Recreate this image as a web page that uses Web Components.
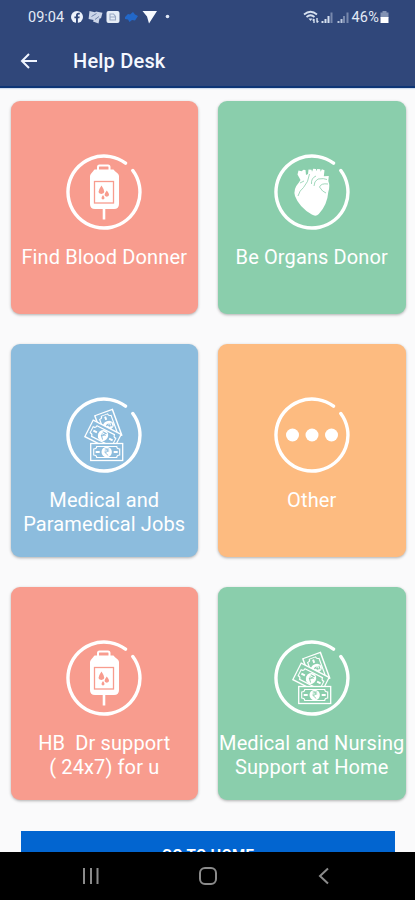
<!DOCTYPE html>
<html lang="en">
<head>
<meta charset="UTF-8">
<meta name="viewport" content="width=device-width, initial-scale=1.0">
<title>Help Desk</title>
<style>
  html, body {
    margin: 0;
    height: 100%;
    overflow: hidden;
    font-family: Roboto, sans-serif;
  }
</style>
</head>
<body>
<help-desk-app></help-desk-app>

<script>
class StatusBar extends HTMLElement {
  connectedCallback() {
    this.attachShadow({ mode: 'open' });
    this.shadowRoot.innerHTML = `
      <style>
        :host {
          display: flex;
          justify-content: space-between;
          align-items: center;
          height: 34px;
          padding: 0 26px 0 28px;
          color: #e3eaf6;
          font-size: 14.5px;
        }

        .side {
          display: flex;
          align-items: center;
        }

        svg {
          display: block;
        }

        .time {
          width: 43px;
        }

        .percent {
          margin-left: -2px;
          letter-spacing: 0.2px;
        }

        .battery {
          margin-left: 1px;
        }
      </style>
      <div class="side">
        <span class="time">09:04</span>
        <svg width="100" height="14" viewBox="0 0 100 14">
          <circle cx="6" cy="7" r="6" fill="#edf2fb"/>
          <path d="M5 13V8.3H3.4V6.4H5V5.2C5 3.6 6 2.7 7.4 2.7h1.4v1.8H7.9c-.7 0-1 .3-1 .9v1h1.8l-.3 1.9H6.9V13z" fill="#30477a"/>
          <path d="M18.500 1l5.500 1.200 1-.7 6.500 1.200-1.500 5.500-1.500.3-1 5-5.500-2 .6-1.600-5-1z" fill="#cbd5e8"/>
          <path d="M20.500 6.500l5-3M24 9.500l4-3" stroke="#7386ab" stroke-width="1" fill="none"/>
          <rect x="35.500" y="1" width="13" height="12" rx="2" fill="#e6edf6"/>
          <path d="M39 10V4h3.500l2 2.500V10zM39 7h5" stroke="#9aa9c4" stroke-width="1.100" fill="none"/>
          <path d="M54 7l3-3 2 .5 3-2.500 2 2.500 3 1.500-3 4.500-3-.5-2.500 2-1.500-2.500-3-.5z" fill="#2268c9"/>
          <path d="M71.500 1h14.500l-8 12.500-2-7z" fill="#f7faff"/>
          <circle cx="96.500" cy="6.500" r="1.800" fill="#dfe7f5"/>
        </svg>
      </div>
      <div class="side">
        <svg width="50" height="15" viewBox="0 0 50 15">
          <path d="M1 4.500Q7.500-1 14 4.500M3.500 7q4-3.500 8 0" fill="none" stroke="#d5e0ef" stroke-width="1.700"/>
          <path d="M5.500 8.500h4l-2 2.500z" fill="#d5e0ef"/>
          <path d="M11 13V9m0 0l-1.300 1.500M14 8v4.500m0 0l1.300-1.500" stroke="#d5e0ef" stroke-width="1.400" fill="none"/>
          <path d="M19.500 13v-2M22.500 13V9M25.500 13V6" stroke="#d5e0ef" stroke-width="2"/>
          <path d="M28.500 13V2.500" stroke="#7788ac" stroke-width="2"/>
          <path d="M35.500 13v-2M38.500 13V9" stroke="#b9c6dc" stroke-width="2"/>
          <path d="M41 13V6M44.500 13V2.500" stroke="#7788ac" stroke-width="2"/>
        </svg>
        <span class="percent">46%</span>
        <svg class="battery" width="9" height="14" viewBox="0 0 9 14">
          <path d="M2.500 1h4v1.500h2V8H.5V2.500h2z" fill="#8292b3"/>
          <path d="M.5 7h8v6h-8z" fill="#fff"/>
        </svg>
      </div>
    `;
  }
}

class AppHeader extends HTMLElement {
  connectedCallback() {
    this.attachShadow({ mode: 'open' });
    this.shadowRoot.innerHTML = `
      <style>
        :host {
          display: block;
          box-sizing: border-box;
          height: 88px;
          background-color: #30477a;
          border-bottom: 2px solid #0d3576;
          box-shadow: 0 1px 1px #cfdcee;
          z-index: 1;
        }

        .toolbar {
          display: flex;
          align-items: center;
          height: 54px;
          padding-left: 20px;
        }

        h1 {
          margin: 0 0 0 35px;
          font-size: 20px;
          font-weight: 500;
          letter-spacing: 0.2px;
          color: #f5f8ff;
        }
      </style>
      <status-bar></status-bar>
      <div class="toolbar">
        <svg width="18" height="16" viewBox="0 0 18 16">
          <path d="M17 8H2M9 1L2 8l7 7" fill="none" stroke="#f0f5ff" stroke-width="2"/>
        </svg>
        <h1><slot></slot></h1>
      </div>
    `;
  }
}

// One rupee note, drawn around its own centre
const note = `
  <rect x="-16" y="-8.500" width="32" height="17" fill="var(--tile)" stroke="#fff" stroke-width="1.300"/>
  <path d="M-10-5.500h20q0 2.500 3 2.500v6q-3 0-3 2.500h-20q0-2.500-3-2.500v-6q3 0 3-2.500z" fill="none" stroke="#fff" stroke-width="1.100"/>
  <circle r="5.200" fill="#fff"/>
  <path d="M-2-3h4.500M-2-1h4.500M-1-3q3 0 2 2t-3 1.200l3.500 3.300" fill="none" stroke="var(--tile)" stroke-width=".9"/>
  <path d="M-11 0h4M7 0h4" stroke="#fff" stroke-width="1.800"/>
`;

const icons = {
  blood: `
    <path d="M32 17v-4q0-1.500 1.500-1.500h8.500q1.500 0 1.500 1.500v4" fill="none" stroke="#fff" stroke-width="2"/>
    <path d="M29 15.500h18q1 0 1.500 1.200l3.500 3q1 1 1 2.500V50q0 5-5 5H29q-5 0-5-5V22.200q0-1.500 1-2.500l2.500-3q.5-1.200 1.500-1.200z" fill="#fff"/>
    <rect x="28.500" y="27.500" width="19" height="21.500" fill="none" stroke="var(--tile)" stroke-width="1.300"/>
    <path d="M35.500 31.500q5.500 8-.2 8.500-5.500-.4.200-8.500zM40.800 36.500q4.500 5.500 0 6.200-4.500-.5 0-6.200zM37 41q3 4 0 4.400-3-.4 0-4.400z" fill="var(--tile)"/>
    <path d="M38 55v10.500" stroke="#fff" stroke-width="2.600"/>
  `,
  heart: `
    <path d="M24.500 16.500l3 .8 2-1.500 2 .3.500 5 2-1 .5-4.600 3 .2.500 2 1.200-3 2.800.3.300 2.300 1-2.300 3 .3.300 2.500 1.300-2.500 2.600 1-.7 6 5-.2-.5 5q2 5 0 11-1 13-9.500 22-3 3-7 .5Q25 53 21 42q-2-7 3.500-13l2-3-3-5.500z" fill="#fff"/>
    <path d="M35.500 20q-1 8-6 13.500-4 3-5.500 8.500M42 22q-5 2-4.500 8M44 25q-4 2-4 7M44 25q6-1 9 .5M54 30q-7-1-8.500 3 3 5 6.500 6M26 29l4-2" fill="none" stroke="var(--tile)" stroke-width=".8"/>
  `,
  money: `
    <g transform="translate(42.300 28.500) rotate(70) scale(.86 1.100)">${note}</g>
    <g transform="translate(37 38.500) rotate(27) scale(.98 1.080)">${note}</g>
    <g transform="translate(40.700 55)">${note}</g>
  `,
  other: `
    <circle cx="18.500" cy="38" r="6.500" fill="#fff"/>
    <circle cx="38" cy="38" r="6.500" fill="#fff"/>
    <circle cx="57.500" cy="38" r="6.500" fill="#fff"/>
  `
};

class ServiceCard extends HTMLElement {
  connectedCallback() {
    this.attachShadow({ mode: 'open' });
    this.shadowRoot.innerHTML = `
      <style>
        :host {
          display: flex;
          flex-direction: column;
          align-items: center;
          box-sizing: border-box;
          padding-top: 53px;
          border-radius: 9px;
          background-color: var(--tile);
          box-shadow: 0 1px 3px rgba(0, 0, 0, 0.3);
          color: #fff;
        }

        :host([tone="coral"]) { --tile: #f89c8e; }
        :host([tone="green"]) { --tile: #8aceac; }
        :host([tone="blue"]) { --tile: #8cbcdd; }
        :host([tone="orange"]) { --tile: #fdbb80; }

        svg {
          display: block;
          flex: none;
        }

        .label {
          margin-top: 15px;
          font-size: 20px;
          line-height: 24px;
          text-align: center;
          white-space: pre;
          letter-spacing: 0.12px;
        }
      </style>
      <svg width="76" height="76" viewBox="0 0 76 76">
        <path d="M59.500 9.200A36 36 0 1 0 66.800 16.500" fill="none" stroke="#fff" stroke-width="3.400" stroke-linecap="round"/>
        ${icons[this.getAttribute('icon')]}
      </svg>
      <div class="label"><slot></slot></div>
    `;
  }
}

class HomeButton extends HTMLElement {
  connectedCallback() {
    this.attachShadow({ mode: 'open' });
    this.shadowRoot.innerHTML = `
      <style>
        :host {
          display: flex;
          justify-content: center;
          flex: none;
          box-sizing: border-box;
          height: 48px;
          padding-top: 15px;
          background-color: #0265d0;
          color: #fff;
          font-size: 15px;
          font-weight: 700;
          line-height: 18px;
          letter-spacing: 0.3px;
        }
      </style>
      <slot></slot>
    `;
  }
}

class NavBar extends HTMLElement {
  connectedCallback() {
    this.attachShadow({ mode: 'open' });
    this.shadowRoot.innerHTML = `
      <style>
        :host {
          display: grid;
          grid-template-columns: repeat(3, 116.5px);
          justify-content: center;
          justify-items: center;
          align-items: center;
          height: 48px;
          background-color: #000;
        }

        svg {
          fill: none;
          stroke: #8b8b8b;
          stroke-width: 2;
        }
      </style>
      <svg width="18" height="18" viewBox="0 0 18 18"><path d="M2 1v16M9 1v16M15.500 1v16"/></svg>
      <svg width="18" height="18" viewBox="0 0 18 18"><rect x="1" y="1" width="16" height="16" rx="5"/></svg>
      <svg width="18" height="18" viewBox="0 0 18 18"><path d="M13 1.500L5 9l8 7.500"/></svg>
    `;
  }
}

class HelpDeskApp extends HTMLElement {
  connectedCallback() {
    this.attachShadow({ mode: 'open' });
    this.shadowRoot.innerHTML = `
      <style>
        :host {
          display: grid;
          grid-template-rows: 88px 1fr 48px;
          height: 100vh;
          background-color: #fafafb;
        }

        main {
          min-height: 0;
          overflow: hidden;
          padding: 13px 9.500px 0 10.500px;
        }

        .cards {
          display: grid;
          grid-template-columns: 1fr 1fr;
          grid-auto-rows: 213px;
          gap: 30.200px 20px;
        }

        home-button {
          margin: 30.600px 10.500px 0;
        }
      </style>
      <app-header>Help Desk</app-header>
      <main>
        <div class="cards">
          <service-card tone="coral" icon="blood">Find Blood Donner</service-card>
          <service-card tone="green" icon="heart">Be Organs Donor</service-card>
          <service-card tone="blue" icon="money">Medical and<br>Paramedical Jobs</service-card>
          <service-card tone="orange" icon="other">Other</service-card>
          <service-card tone="coral" icon="blood">HB  Dr support<br>( 24x7) for u</service-card>
          <service-card tone="green" icon="money">Medical and Nursing<br>Support at Home</service-card>
        </div>
        <home-button>GO TO HOME</home-button>
      </main>
      <nav-bar></nav-bar>
    `;
  }
}

customElements.define('status-bar', StatusBar);
customElements.define('app-header', AppHeader);
customElements.define('service-card', ServiceCard);
customElements.define('home-button', HomeButton);
customElements.define('nav-bar', NavBar);
customElements.define('help-desk-app', HelpDeskApp);
</script>
</body>
</html>
